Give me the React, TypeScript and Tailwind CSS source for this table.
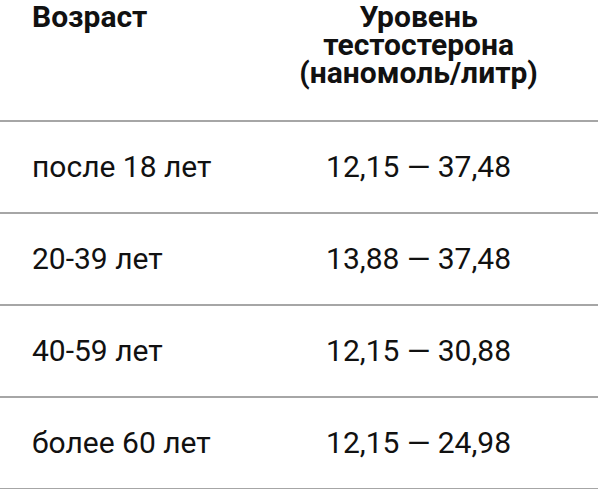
const rows = [
  { age: 'после 18 лет', range: '12,15 — 37,48' },
  { age: '20-39 лет', range: '13,88 — 37,48' },
  { age: '40-59 лет', range: '12,15 — 30,88' },
  { age: 'более 60 лет', range: '12,15 — 24,98' },
];

export default function App() {
  return (
    <div
      className="w-[600px] h-[489px] bg-white text-[#111] overflow-hidden"
      style={{ fontFamily: 'Roboto, "Noto Sans", sans-serif' }}
    >
      <div className="w-[598px]">
        {/* Header */}
        <div className="grid grid-cols-[2fr_3fr] h-[122px] border-b-2 border-[#a6a6a6] pt-[3px]">
          <div className="pl-8 font-bold text-[30px] leading-[28px]">Возраст</div>
          <div className="text-center font-bold text-[30px] leading-[28px]">
            Уровень
            <br />
            тестостерона
            <br />
            (наномоль/литр)
          </div>
        </div>
        {/* Rows */}
        {rows.map((r) => (
          <div
            key={r.age}
            className="grid grid-cols-[2fr_3fr] items-center h-[92px] border-b-2 border-[#a6a6a6] text-[30px] leading-[34px]"
          >
            <div className="pl-8">{r.age}</div>
            <div className="text-center">{r.range}</div>
          </div>
        ))}
      </div>
    </div>
  );
}
